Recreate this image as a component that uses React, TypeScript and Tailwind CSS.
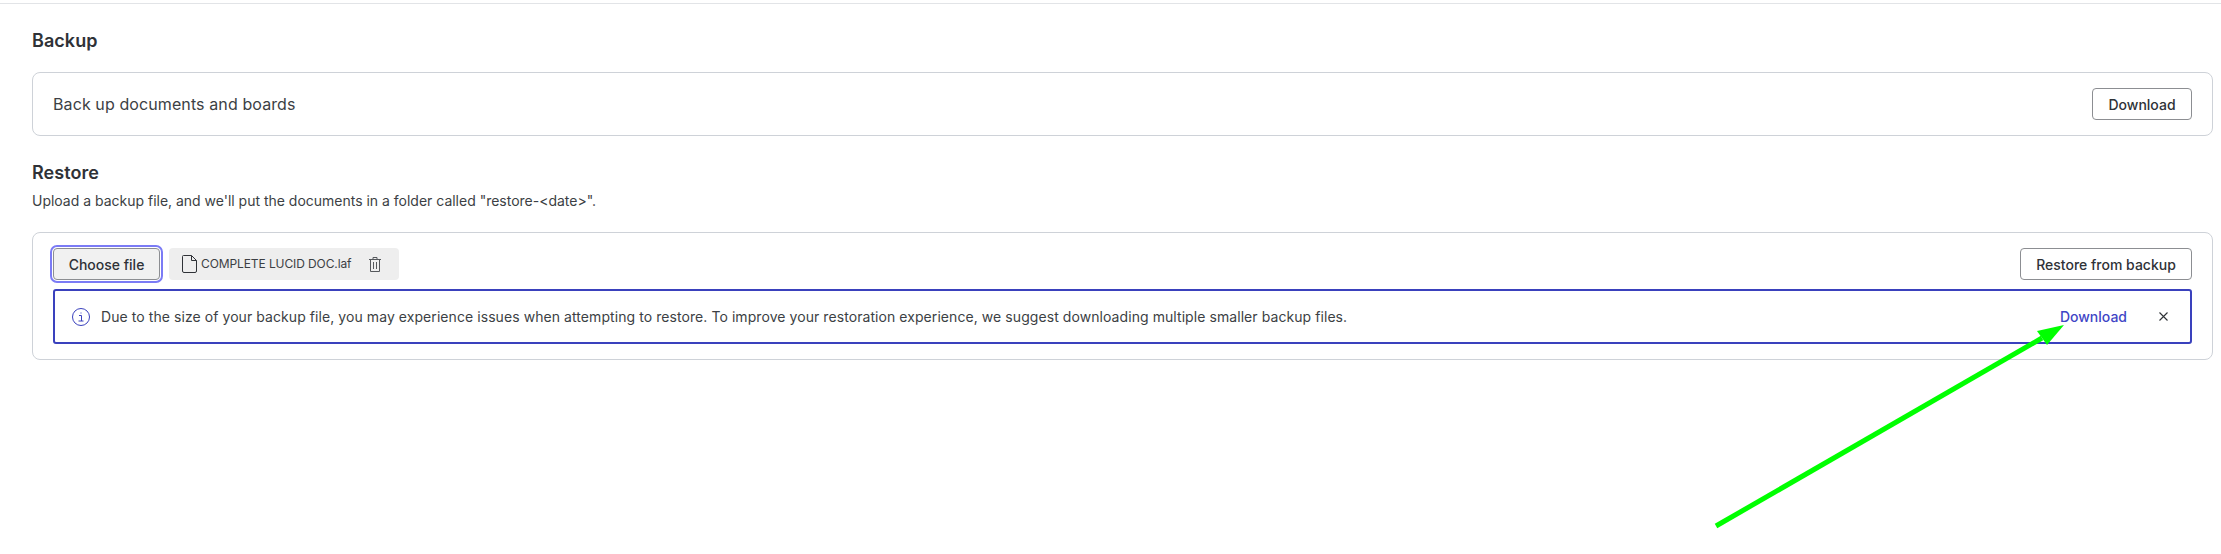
import React from "react";

export default function App() {
  return (
    <div className="relative h-[554px] w-[2221px] overflow-hidden bg-white font-['Inter',sans-serif] text-[#2f3237]">
      <div className="mt-[3px] h-[1px] bg-[#e2e4e7]" />

      <div className="pl-[32px] pr-[8px]">
        {/* Backup */}
        <h2 className="mt-[25px] text-[18px] leading-[24px] font-semibold tracking-[0.05px]">Backup</h2>
        <div className="mt-[19px] flex h-[64px] items-center justify-between rounded-[8px] border border-[#ced2d8] pl-[20px] pr-[20px]">
          <span className="text-[16px] tracking-[0.1px] text-[#3c3f44]">Back up documents and boards</span>
          <button className="flex h-[32px] w-[100px] items-center justify-center rounded-[4px] border border-[#8c8e92] text-[14px] font-medium">
            Download
          </button>
        </div>

        {/* Restore */}
        <h2 className="mt-[25px] text-[18px] leading-[24px] font-semibold tracking-[0.05px]">Restore</h2>
        <p className="mt-[6px] text-[14px] leading-[20px] tracking-[-0.01px] text-[#3c3f44]">
          Upload a backup file, and we'll put the documents in a folder called "restore-&lt;date&gt;".
        </p>

        <div className="mt-[21px] h-[128px] rounded-[8px] border border-[#ced2d8] px-[20px] pt-[15px]">
          <div className="flex items-center justify-between">
            <div className="flex items-center gap-[9px]">
              <button className="flex h-[32px] w-[107px] items-center justify-center rounded-[4px] border border-[#8c8e92] bg-[#f1f1f1] text-[14px] font-medium outline-[2px] outline-offset-[1px] outline-[#7b7bf5] outline">
                Choose file
              </button>
              <div className="flex h-[32px] w-[230px] items-center rounded-[4px] bg-[#eeeeee] pl-[13px] text-[12px] text-[#3c3f44]">
                <svg width="15" height="18" viewBox="0 0 15 18" fill="none" stroke="#2f3237" strokeWidth="1">
                  <path d="M1.500 .5H9.500L14.500 5.500V16a1.500 1.500 0 0 1-1.500 1.500H2A1.500 1.500 0 0 1 .5 16V1.500A1 1 0 0 1 1.500 .5Z" />
                  <path d="M9.500 .5V5.500H14.500" />
                </svg>
                <span className="ml-[4px] tracking-[-0.1px]">COMPLETE LUCID DOC.laf</span>
                <svg className="ml-[18px]" width="12" height="15" viewBox="0 0 12 15" fill="none" stroke="#55585c" strokeWidth="1">
                  <path d="M0 2.500H12M4 2.500V.5H8V2.500M1.500 2.500V14.500H10.500V2.500M4.500 5V12M7.500 5V12" />
                </svg>
              </div>
            </div>
            <button className="flex h-[32px] w-[172px] items-center justify-center rounded-[4px] border border-[#8c8e92] text-[14px] font-medium">
              Restore from backup
            </button>
          </div>

          <div className="mt-[9px] flex h-[55px] items-center rounded-[3px] border-2 border-[#3a41bd] pl-[17px]">
            <svg width="18" height="18" viewBox="0 0 18 18" fill="none" stroke="#3a41bd" strokeWidth="1">
              <circle cx="9" cy="9" r="8.500" />
              <path d="M7 7.500H9.500V13M6.500 13H11.500M9 4.500V5.500" />
            </svg>
            <span className="ml-[11px] text-[14px] tracking-[0.07px] text-[#3c3f44]">
              Due to the size of your backup file, you may experience issues when attempting to restore. To improve your restoration experience, we suggest downloading multiple smaller backup files.
            </span>
            <span className="ml-auto text-[14px] font-medium text-[#3f46c6]">Download</span>
            <svg className="ml-[32px] mr-[22px]" width="9" height="9" viewBox="0 0 9 9" stroke="#2f3237" strokeWidth="1.100">
              <path d="M.5 .5L8.500 8.500M8.500 .5L.5 8.500" />
            </svg>
          </div>
        </div>
      </div>

      {/* annotation arrow */}
      <svg className="absolute left-0 top-0" width="2221" height="554" viewBox="0 0 2221 554">
        <path d="M1716 526L2042 338" stroke="#00ff00" strokeWidth="5" />
        <path d="M2064 325L2037 331L2047 345Z" fill="#00ff00" />
      </svg>
    </div>
  );
}
